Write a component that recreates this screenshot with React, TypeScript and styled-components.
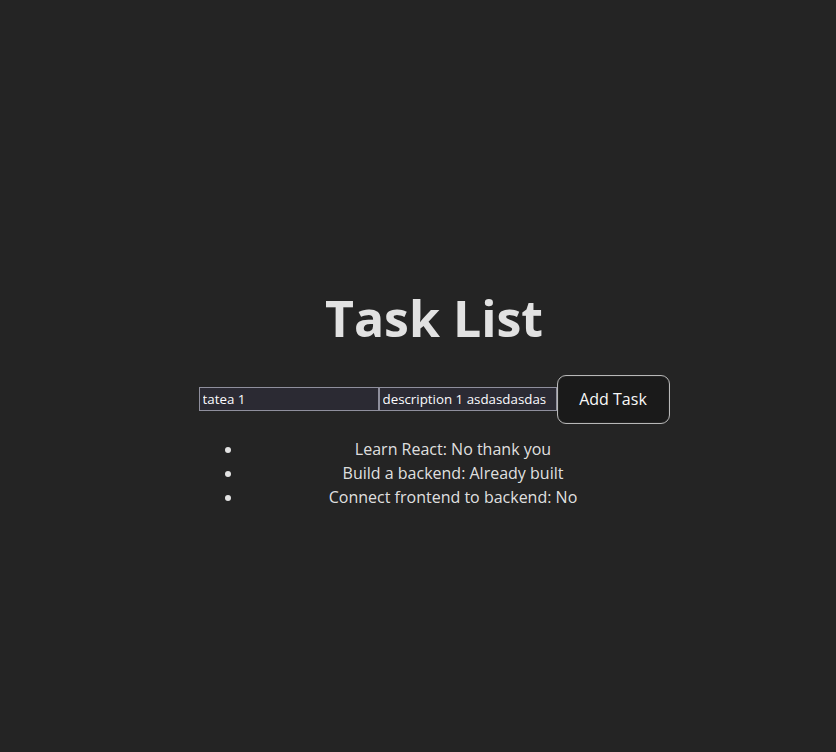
import React from "react";
import styled, { createGlobalStyle } from "styled-components";

const Global = createGlobalStyle`
  html, body { margin: 0; padding: 0; }
  body {
    background: #242424;
    color: rgba(255,255,255,0.87);
    font-family: "Open Sans", sans-serif;
    font-size: 16px;
    line-height: 1.5;
    display: flex;
    justify-content: center;
    align-items: center;
    min-height: 100vh;
  }
`;

const Root = styled.main`
  text-align: center;
  padding: 47px 2rem 17px calc(2rem + 32px);
`;

const Title = styled.h1`
  font-size: 50px;
  line-height: 1.1;
  font-weight: 700;
  margin: 0.67em 0 calc(0.67em - 5px);
`;

const Form = styled.div`
  display: flex;
  align-items: center;
`;

const Input = styled.input`
  width: 180px;
  height: 24px;
  box-sizing: border-box;
  background: #2b2a33;
  color: #fbfbfe;
  border: 1px solid #8f8f9d;
  font-family: "Open Sans", sans-serif;
  font-size: 13.33px;
  padding: 1px 3px;
  margin: 0;
  outline: none;
  &:nth-of-type(2) { width: 178px; }
`;

const Button = styled.button`
  border-radius: 9px;
  border: 1px solid #b8b8b8;
  padding: 0.6em 1.2em;
  font-size: 1em;
  font-weight: 500;
  font-family: inherit;
  line-height: 1.5;
  height: 49px;
  background: #1a1a1a;
  color: #f8f8f8;
  cursor: pointer;
  width: 113px;
  box-shadow: 0 0 0 1px #242424 inset;
`;

const List = styled.ul`
  margin: 13px 0 1em;
  padding-left: 40px;
`;

const Item = styled.li`
  line-height: 24px;
  margin: 0 -4px 0 4px;
  padding-right: 10px;
`;

const tasks = [
  ["Learn React", "No thank you"],
  ["Build a backend", "Already built"],
  ["Connect frontend to backend", "No"],
];

export default function App() {
  return (
    <>
      <Global />
      <Root>
        <Title>Task List</Title>
        <Form>
          <Input defaultValue="tatea 1" />
          <Input defaultValue="description 1 asdasdasdas" />
          <Button>Add Task</Button>
        </Form>
        <List>
          {tasks.map(([t, d]) => (
            <Item key={t}>
              {t}: {d}
            </Item>
          ))}
        </List>
      </Root>
    </>
  );
}
